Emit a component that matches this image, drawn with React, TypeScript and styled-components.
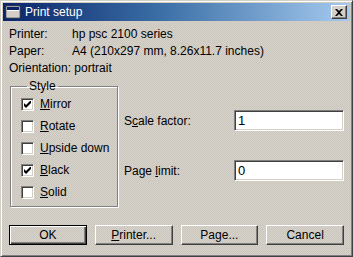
import React from 'react';
import styled, { createGlobalStyle } from 'styled-components';

const GlobalStyle = createGlobalStyle`
  html, body {
    margin: 0;
    padding: 0;
    background: #d4d0c8;
  }
  body {
    font-family: "Liberation Sans", Arial, sans-serif;
    font-size: 12px;
    color: #000;
  }
`;

const face = '#d4d0c8';
const dither = `repeating-conic-gradient(#d6d2ca 0 25%, #cbc7bf 0 50%) 0 0 / 2px 2px`;

const Window = styled.div`
  width: 353px;
  height: 257px;
  box-sizing: border-box;
  border: 1px solid;
  border-color: ${face} #404040 #404040 ${face};
  box-shadow: inset 1px 1px #fff, inset -1px -1px #808080;
  padding: 2px;
  background: ${dither};
  display: flex;
  flex-direction: column;
`;

const TitleBar = styled.div`
  height: 18px;
  display: flex;
  align-items: center;
  padding: 0 3px 0 2px;
  background: linear-gradient(90deg, #0a246a 0%, #3a6ea5 45%, #a6caf0 100%);
  color: #fff;
  font-size: 12px;
  gap: 4px;
`;

const TitleText = styled.span`
  flex: 1;
  line-height: 18px;
`;

const CloseButton = styled.div`
  width: 16px;
  height: 14px;
  box-sizing: border-box;
  background: ${face};
  border: 1px solid;
  border-color: #fff #404040 #404040 #fff;
  box-shadow: inset -1px -1px #808080;
  display: flex;
  align-items: center;
  justify-content: center;
`;

const Body = styled.div`
  flex: 1;
  display: flex;
  flex-direction: column;
  padding: 5px 6px 0 6px;
`;

const InfoRow = styled.div`
  display: flex;
  height: 17px;
  line-height: 17px;
  white-space: nowrap;
`;

const InfoLabel = styled.span`
  width: 63px;
  flex: none;
`;

const Main = styled.div`
  display: grid;
  grid-template-columns: 108px 1fr;
  column-gap: 6px;
  margin-top: 2px;
  padding-left: 1px;
`;

const Group = styled.fieldset`
  margin: 0;
  padding: 0 0 4px 10px;
  border: 1px solid #808080;
  box-shadow: 1px 1px #fff, inset 1px 1px #fff;
  min-width: 0;
  height: 128px;
  box-sizing: border-box;
`;

const Legend = styled.legend`
  padding: 0 2px;
  margin-left: 6px;
  line-height: 14px;
`;

const CheckRow = styled.label`
  display: flex;
  align-items: center;
  gap: 6px;
  height: 22px;
`;

const Box = styled.span`
  width: 13px;
  height: 13px;
  box-sizing: border-box;
  background: #fff;
  border: 1px solid;
  border-color: #808080 #fff #fff #808080;
  box-shadow: inset 1px 1px #404040, inset -1px -1px ${face};
  display: flex;
  align-items: center;
  justify-content: center;
`;

const Fields = styled.div`
  display: flex;
  flex-direction: column;
  gap: 29px;
  padding-top: 31px;
`;

const FieldRow = styled.div`
  display: flex;
  align-items: center;
  height: 21px;
`;

const FieldLabel = styled.span`
  width: 110px;
  flex: none;
`;

const Input = styled.div`
  flex: 1;
  height: 21px;
  box-sizing: border-box;
  background: #fff;
  border: 1px solid;
  border-color: #808080 #fff #fff #808080;
  box-shadow: inset 1px 1px #404040, inset -1px -1px ${face};
  padding: 0 3px;
  line-height: 19px;
  font-size: 13px;
`;

const Buttons = styled.div`
  display: grid;
  grid-template-columns: repeat(4, 1fr);
  column-gap: 8px;
  margin-top: 18px;
`;

const Button = styled.div<{ $default?: boolean }>`
  height: 20px;
  box-sizing: border-box;
  display: flex;
  align-items: center;
  justify-content: center;
  background: ${dither};
  border: 1px solid;
  border-color: ${(p) => (p.$default ? '#000' : '#fff #404040 #404040 #fff')};
  box-shadow: ${(p) =>
    p.$default
      ? `inset 1px 1px #fff, inset -1px -1px #404040, inset -2px -2px #808080`
      : `inset -1px -1px #808080`};
`;

const Key = styled.span`
  text-decoration: underline;
  text-underline-offset: 1px;
`;

const AppIcon = () => (
  <svg width="16" height="16" viewBox="0 0 16 16">
    <rect x="1.5" y="2.5" width="13" height="11" fill="#d4d0c8" stroke="#fff" />
    <rect x="1" y="2" width="14" height="12" fill="none" stroke="#404040" strokeWidth="1" />
    <rect x="2" y="3" width="12" height="3" fill="#0a246a" />
    <rect x="2" y="6" width="12" height="1" fill="#fff" />
  </svg>
);

const CloseIcon = () => (
  <svg width="8" height="7" viewBox="0 0 8 7">
    <path d="M0 0h2l2 2 2-2h2L5 3.5 8 7H6L4 5 2 7H0l3-3.5z" fill="#000" />
  </svg>
);

const Check = () => (
  <svg width="7" height="7" viewBox="0 0 7 7">
    <path d="M0 2v3l2 2 5-5V-1L2 4z" fill="#000" />
  </svg>
);

const styles = [
  { key: 'M', rest: 'irror', checked: true },
  { key: 'R', rest: 'otate', checked: false },
  { key: 'U', rest: 'pside down', checked: false },
  { key: 'B', rest: 'lack', checked: true },
  { key: 'S', rest: 'olid', checked: false },
];

const App: React.FC = () => {
  return (
    <>
      <GlobalStyle />
      <Window>
        <TitleBar>
          <AppIcon />
          <TitleText>Print setup</TitleText>
          <CloseButton>
            <CloseIcon />
          </CloseButton>
        </TitleBar>

        <Body>
          <InfoRow>
            <InfoLabel>Printer:</InfoLabel>
            hp psc 2100 series
          </InfoRow>
          <InfoRow>
            <InfoLabel>Paper:</InfoLabel>
            A4 (210x297 mm, 8.26x11.7 inches)
          </InfoRow>
          <InfoRow>Orientation: portrait</InfoRow>

          <Main>
            <Group>
              <Legend>Style</Legend>
              {styles.map((s) => (
                <CheckRow key={s.key}>
                  <Box>{s.checked && <Check />}</Box>
                  <span>
                    <Key>{s.key}</Key>
                    {s.rest}
                  </span>
                </CheckRow>
              ))}
            </Group>

            <Fields>
              <FieldRow>
                <FieldLabel>
                  S<Key>c</Key>ale factor:
                </FieldLabel>
                <Input>1</Input>
              </FieldRow>
              <FieldRow>
                <FieldLabel>
                  Page <Key>l</Key>imit:
                </FieldLabel>
                <Input>0</Input>
              </FieldRow>
            </Fields>
          </Main>

          <Buttons>
            <Button $default>OK</Button>
            <Button>
              <Key>P</Key>rinter...
            </Button>
            <Button>
              Pa<Key>g</Key>e...
            </Button>
            <Button>Cancel</Button>
          </Buttons>
        </Body>
      </Window>
    </>
  );
};

export default App;
